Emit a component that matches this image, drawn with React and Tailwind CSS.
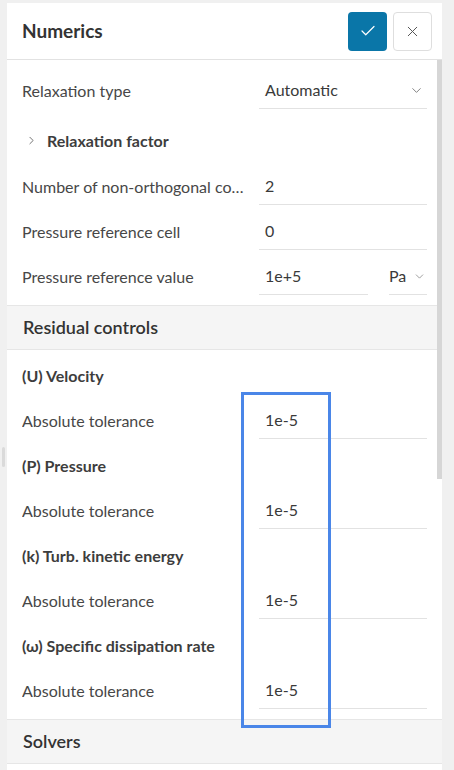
import React from 'react';
import { Check, X, ChevronDown, ChevronRight } from 'lucide-react';

const Field = ({ label, children }) => (
  <div className="flex items-center h-[45px]">
    <div className="w-[226px] mr-[11px] truncate text-[16px] text-[#474747]">{label}</div>
    {children}
  </div>
);

const TextInput = ({ value, className = 'w-[168px]' }) => (
  <div className={`${className} h-9 border-b border-[#e2e2e2] flex items-center pl-1.5 text-[16px] text-[#3a3a3a]`}>
    {value}
  </div>
);

const Group = ({ title }) => (
  <div className="flex items-center h-[45px] text-[16px] font-bold text-[#3d3d3d]">{title}</div>
);

const SectionHeader = ({ title, className = '' }) => (
  <div className={`h-[45px] flex items-center px-4 bg-[#f5f5f5] border-y border-[#e6e6e6] text-[18px] font-semibold text-[#333] ${className}`}>
    {title}
  </div>
);

const tolerances = [
  '(U) Velocity',
  '(P) Pressure',
  '(k) Turb. kinetic energy',
  '(ω) Specific dissipation rate',
];

export default function App() {
  return (
    <div className="relative h-[770px] overflow-hidden bg-[#f0f0f0] font-['Lato','Open_Sans',sans-serif]">
      {/* resize handle */}
      <div className="absolute left-[2px] top-[447px] w-[3px] h-[20px] rounded bg-[#dadada]" />

      <div className="relative ml-[7px] mt-[3px] w-[435px] h-[767px] bg-white flex flex-col">
        {/* header */}
        <div className="h-[57px] flex items-center justify-between pl-[15px] pr-[10px] border-b border-[#e2e2e2] shrink-0">
          <h1 className="text-[19px] font-bold text-[#333]">Numerics</h1>
          <div className="flex gap-[6px]">
            <button className="w-[39px] h-[39px] rounded bg-[#0a76a8] flex items-center justify-center">
              <Check size={18} strokeWidth={1.6} className="text-white" />
            </button>
            <button className="w-[39px] h-[39px] rounded border border-[#dedede] bg-white flex items-center justify-center">
              <X size={17} strokeWidth={1.4} className="text-[#555]" />
            </button>
          </div>
        </div>

        {/* body */}
        <div className="relative flex-1 overflow-hidden">
          <div className="absolute right-0 top-0 w-[5px] h-[419px] bg-[#d6d6d6]" />

          <div className="px-[15px] pt-[8px] pb-[6px]">
            <Field label="Relaxation type">
              <div className="w-[168px] h-9 border-b border-[#e2e2e2] flex items-center justify-between pl-1.5 pr-[3px] text-[16px] text-[#3a3a3a]">
                Automatic
                <ChevronDown size={15} strokeWidth={1.3} className="text-[#666]" />
              </div>
            </Field>
            <div className="flex items-center h-[51px] pt-1 pl-[3px] gap-[9px] text-[16px] font-bold text-[#3d3d3d]">
              <ChevronRight size={13} strokeWidth={1.5} className="text-[#555]" />
              Relaxation factor
            </div>
            <Field label="Number of non-orthogonal correctors">
              <TextInput value="2" />
            </Field>
            <Field label="Pressure reference cell">
              <TextInput value="0" />
            </Field>
            <Field label="Pressure reference value">
              <TextInput value="1e+5" className="w-[109px]" />
              <div className="ml-[21px] w-[38px] h-9 border-b border-[#e2e2e2] flex items-center justify-between text-[16px] text-[#3a3a3a]">
                Pa
                <ChevronDown size={13} strokeWidth={1.3} className="text-[#777] mr-[1px]" />
              </div>
            </Field>
          </div>

          <SectionHeader title="Residual controls" className="mr-[5px]" />

          <div className="px-[15px] pt-[3px] pb-[6px]">
            {tolerances.map((t) => (
              <div key={t}>
                <Group title={t} />
                <Field label="Absolute tolerance">
                  <TextInput value="1e-5" />
                </Field>
              </div>
            ))}
          </div>

          <SectionHeader title="Solvers" />
        </div>
      </div>

      {/* highlight box */}
      <div className="absolute left-[241px] top-[392px] w-[90px] h-[336px] border-[3px] border-[#4a86e8]" />
    </div>
  );
}
